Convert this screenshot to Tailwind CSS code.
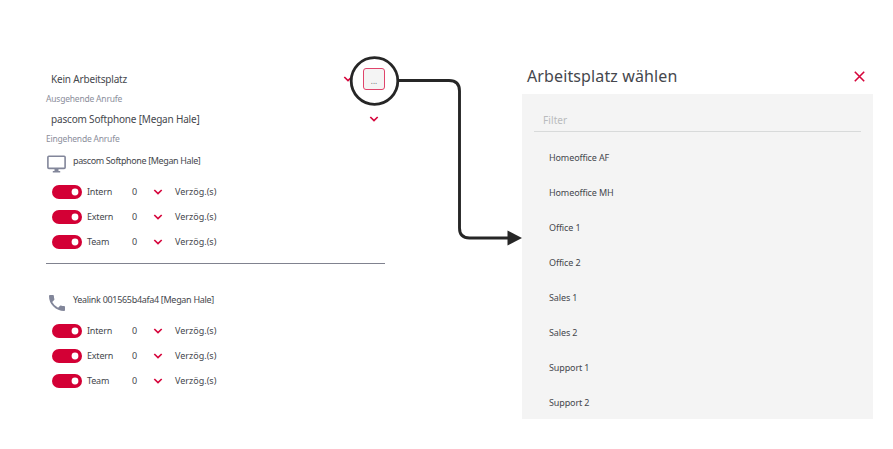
<!DOCTYPE html>
<html lang="de">
<head>
<meta charset="utf-8">
<title>Arbeitsplatz wählen</title>
<script src="https://cdn.jsdelivr.net/npm/@tailwindcss/browser@4"></script>
</head>
<body class="bg-white">
<svg class="hidden">
  <symbol id="chev" viewBox="0 0 10 6"><path d="M1.300 1l3.700 3.500L8.700 1" fill="none" stroke="#d6063c" stroke-width="1.7"/></symbol>
  <symbol id="switch" viewBox="0 0 30 14"><rect width="30" height="14" rx="7" fill="#d30035"/><circle cx="23" cy="7" r="3.4" fill="#fff"/></symbol>
</svg>
<div class="relative flex h-[449px] w-[893px] overflow-hidden bg-white font-['Noto_Sans',sans-serif] text-[#45474d] whitespace-nowrap">
  <main class="ml-[46px] w-[339px] pt-[69px]">
    <div class="flex h-5 items-center justify-between pl-[5px]">
      <span class="text-[10px] tracking-[-0.18px]">Kein Arbeitsplatz</span>
      <svg class="mr-[32px] h-[6px] w-[10px]"><use href="#chev"/></svg>
    </div>
    <div class="flex h-5 items-center text-[8.5px] tracking-[-0.2px] text-[#8b8e9b]"><span>Ausgehende Anrufe</span></div>
    <div class="flex h-5 items-center justify-between pr-[6px] pl-[5px]">
      <span class="text-[10px] tracking-[-0.18px]">pascom Softphone [Megan Hale]</span>
      <svg class="h-[6px] w-[10px]"><use href="#chev"/></svg>
    </div>
    <div class="flex h-5 items-center text-[8.5px] tracking-[-0.2px] text-[#8b8e9b]"><span>Eingehende Anrufe</span></div>
    <section class="h-[115px] border-b border-[#80828f]">
      <div class="flex h-[30px] items-start">
        <svg class="mt-[6px] ml-[1px] h-[18px] w-[19px]" viewBox="0 0 19 18"><rect x=".9" y="1.2" width="17.2" height="12.2" rx="1" fill="none" stroke="#82869a" stroke-width="1.6"/><path d="M7.5 14h4v2h1.7v1.5H5.8V16h1.7z" fill="#82869a"/></svg>
        <span class="ml-[7px] h-6 text-[9px] leading-6 tracking-[-0.38px]">pascom Softphone [Megan Hale]</span>
      </div>
      <div class="grid grid-cols-[35px_45px_21px_1fr] auto-rows-[25px] items-center pl-[6px] text-[9px] tracking-[-0.2px]">
        <svg class="h-[14px] w-[30px]"><use href="#switch"/></svg><span class="pt-px">Intern</span><span class="pt-px">0</span><span class="flex"><svg class="h-[6px] w-[10px] self-center"><use href="#chev"/></svg><span class="ml-[12px] pt-px tracking-[0px]">Verzög.(s)</span></span>
        <svg class="h-[14px] w-[30px]"><use href="#switch"/></svg><span class="pt-px">Extern</span><span class="pt-px">0</span><span class="flex"><svg class="h-[6px] w-[10px] self-center"><use href="#chev"/></svg><span class="ml-[12px] pt-px tracking-[0px]">Verzög.(s)</span></span>
        <svg class="h-[14px] w-[30px]"><use href="#switch"/></svg><span class="pt-px">Team</span><span class="pt-px">0</span><span class="flex"><svg class="h-[6px] w-[10px] self-center"><use href="#chev"/></svg><span class="ml-[12px] pt-px tracking-[0px]">Verzög.(s)</span></span>
      </div>
    </section>
    <section class="pt-[24px]">
      <div class="flex h-[30px] items-start">
        <svg class="mt-[7px] ml-[3px] h-4 w-4" viewBox="3 3 18 18"><path fill="#82869a" d="M6.62 10.79a15.15 15.15 0 0 0 6.59 6.59l2.2-2.2a1 1 0 0 1 1.02-.24c1.12.37 2.33.57 3.57.57a1 1 0 0 1 1 1V20a1 1 0 0 1-1 1A17 17 0 0 1 3 4a1 1 0 0 1 1-1h3.5a1 1 0 0 1 1 1c0 1.25.2 2.45.57 3.57a1 1 0 0 1-.25 1.02z"/></svg>
        <span class="ml-[8px] h-6 text-[9px] leading-6 tracking-[-0.31px]">Yealink 001565b4afa4 [Megan Hale]</span>
      </div>
      <div class="grid grid-cols-[35px_45px_21px_1fr] auto-rows-[25px] items-center pl-[6px] text-[9px] tracking-[-0.2px]">
        <svg class="h-[14px] w-[30px]"><use href="#switch"/></svg><span class="pt-px">Intern</span><span class="pt-px">0</span><span class="flex"><svg class="h-[6px] w-[10px] self-center"><use href="#chev"/></svg><span class="ml-[12px] pt-px tracking-[0px]">Verzög.(s)</span></span>
        <svg class="h-[14px] w-[30px]"><use href="#switch"/></svg><span class="pt-px">Extern</span><span class="pt-px">0</span><span class="flex"><svg class="h-[6px] w-[10px] self-center"><use href="#chev"/></svg><span class="ml-[12px] pt-px tracking-[0px]">Verzög.(s)</span></span>
        <svg class="h-[14px] w-[30px]"><use href="#switch"/></svg><span class="pt-px">Team</span><span class="pt-px">0</span><span class="flex"><svg class="h-[6px] w-[10px] self-center"><use href="#chev"/></svg><span class="ml-[12px] pt-px tracking-[0px]">Verzög.(s)</span></span>
      </div>
    </section>
  </main>
  <aside class="ml-[137px] w-[351px] pt-[58px]">
    <header class="flex h-9 items-center justify-between pr-[8px] pl-[5px]">
      <h1 class="text-[16px] tracking-[0.12px]">Arbeitsplatz wählen</h1>
      <svg class="h-[11px] w-[11px]" viewBox="0 0 11 11"><path d="M.8.8l9.4 9.4M10.2.8L.8 10.2" stroke="#d6063c" stroke-width="1.6"/></svg>
    </header>
    <div class="h-[325px] bg-[#f4f4f4] px-3">
      <div class="flex h-[38px] items-end border-b border-[#d8dada] pb-[3px] pl-[9px] text-[10px] text-[#b9bbbd]"><span class="tracking-[0.1px]">Filter</span></div>
      <ul class="grid auto-rows-[35px] items-center pt-[8px] pl-[15px] text-[9px] tracking-[-0.12px]">
        <li>Homeoffice AF</li><li>Homeoffice MH</li><li>Office 1</li><li>Office 2</li><li>Sales 1</li><li>Sales 2</li><li>Support 1</li><li>Support 2</li>
      </ul>
    </div>
  </aside>
  <svg class="absolute top-0 left-0 h-[449px] w-[893px]" viewBox="0 0 893 449">
    <circle cx="374.5" cy="81" r="23.3" fill="#fff" stroke="#262626" stroke-width="2.8"/>
    <path d="M398 80.5h51q10.500 0 10.500 10.500v137q0 10 10 10H510" fill="none" stroke="#262626" stroke-width="2.900"/>
    <path d="M507.500 230.500L522 238l-14.500 7.500z" fill="#262626"/>
  </svg>
  <button class="absolute top-[68px] left-[363px] flex h-[22px] w-[22px] items-center justify-center rounded-[3px] border border-[#e0446b] bg-[#f4f4f4] text-[8px] text-[#6d7074]"><span class="pt-[4px]">...</span></button>
</div>
</body>
</html>
